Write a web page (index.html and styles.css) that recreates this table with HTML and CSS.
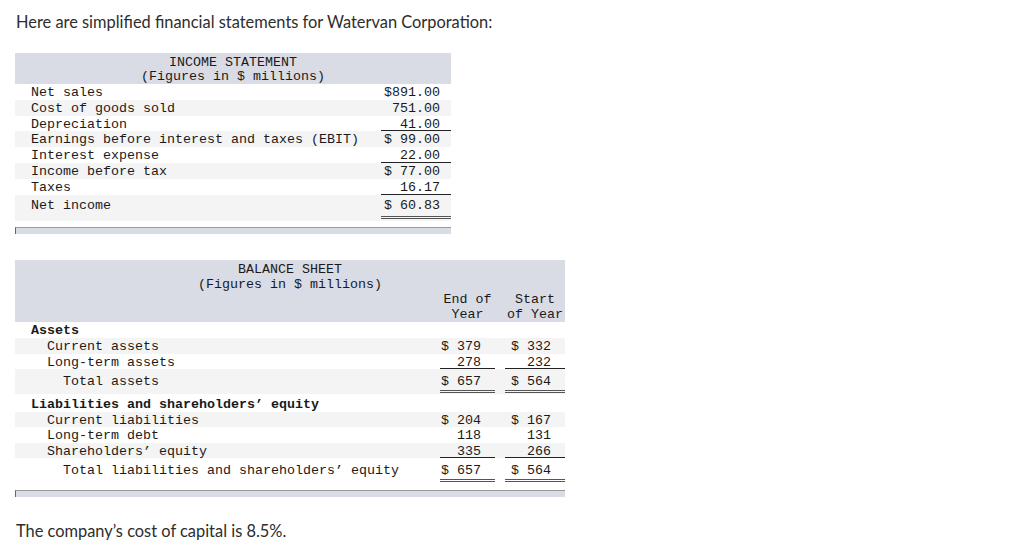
FILE: index.html
```html
<!DOCTYPE html>
<html>
<head>
<meta charset="utf-8">
<link rel="stylesheet" href="styles.css">
</head>
<body>
<div class="page">
  <p class="intro">Here are simplified financial statements for Watervan Corporation:</p>

  <table class="fin income">
    <thead>
      <tr class="hd"><th colspan="2">INCOME STATEMENT<br>(Figures in $ millions)</th></tr>
    </thead>
    <tbody>
      <tr><td class="lbl">Net sales</td><td class="val">$891.00</td></tr>
      <tr class="alt"><td class="lbl">Cost of goods sold</td><td class="val">751.00</td></tr>
      <tr><td class="lbl">Depreciation</td><td class="val ul">41.00</td></tr>
      <tr class="alt"><td class="lbl">Earnings before interest and taxes (EBIT)</td><td class="val">$ 99.00</td></tr>
      <tr><td class="lbl">Interest expense</td><td class="val ul">22.00</td></tr>
      <tr class="alt"><td class="lbl">Income before tax</td><td class="val">$ 77.00</td></tr>
      <tr><td class="lbl">Taxes</td><td class="val ul">16.17</td></tr>
      <tr class="alt net"><td class="lbl">Net income</td><td class="val"><span class="dbl">$ 60.83</span></td></tr>
    </tbody>
  </table>
  <div class="bar bar-income"></div>

  <table class="fin balance">
    <thead>
      <tr class="hd"><th colspan="3">BALANCE SHEET<br>(Figures in $ millions)</th></tr>
      <tr class="hd sub"><th></th><th class="num"><span class="ch">End of<br>Year</span></th><th class="num"><span class="ch">Start<br>of Year</span></th></tr>
    </thead>
    <tbody>
      <tr class="sec"><td class="lbl b">Assets</td><td></td><td></td></tr>
      <tr class="alt"><td class="lbl i1">Current assets</td><td class="num"><span>$ 379</span></td><td class="num"><span>$ 332</span></td></tr>
      <tr><td class="lbl i1">Long-term assets</td><td class="num"><span class="ul">278</span></td><td class="num"><span class="ul">232</span></td></tr>
      <tr class="alt tot"><td class="lbl i2">Total assets</td><td class="num"><span class="dbl">$ 657</span></td><td class="num"><span class="dbl">$ 564</span></td></tr>
      <tr class="sec sec2"><td class="lbl b">Liabilities and shareholders’ equity</td><td></td><td></td></tr>
      <tr class="alt"><td class="lbl i1">Current liabilities</td><td class="num"><span>$ 204</span></td><td class="num"><span>$ 167</span></td></tr>
      <tr><td class="lbl i1">Long-term debt</td><td class="num"><span>118</span></td><td class="num"><span>131</span></td></tr>
      <tr class="alt"><td class="lbl i1">Shareholders’ equity</td><td class="num"><span class="ul">335</span></td><td class="num"><span class="ul">266</span></td></tr>
      <tr class="tot"><td class="lbl i2">Total liabilities and shareholders’ equity</td><td class="num"><span class="dbl">$ 657</span></td><td class="num"><span class="dbl">$ 564</span></td></tr>
    </tbody>
  </table>
  <div class="bar bar-balance"></div>

  <p class="outro">The company’s cost of capital is 8.5%.</p>
</div>
</body>
</html>
```

FILE: styles.css
```css
html, body {
  margin: 0;
  padding: 0;
  background: #ffffff;
}

.page {
  padding: 12px 15px 0 15px;
  font-family: "Lato", "Open Sans", sans-serif;
  color: #2d2d2d;
}

.intro {
  margin: 0;
  font-size: 16.4px;
  line-height: 20px;
  padding-left: 1px;
}

.outro {
  margin: 24px 0 0 0;
  font-size: 16.4px;
  line-height: 20px;
  padding-left: 1px;
}

.fin {
  border-collapse: collapse;
  border-spacing: 0;
  font-family: "Liberation Mono", "Courier New", monospace;
  font-size: 13.33px;
  color: #1a1a1a;
}

.fin td, .fin th {
  padding: 0;
  white-space: pre;
  vertical-align: top;
}

.hd th {
  background: #d9dce5;
  font-weight: normal;
  text-align: center;
}

.alt td {
  background: #f4f4f4;
}

/* ---------- income statement ---------- */
.income {
  width: 436px;
  margin-top: 21px;
}
.income .hd th {
  padding-top: 3px;
  line-height: 14px;
}
.income tbody td {
  padding-top: 3px;
  line-height: 12.8px;
}
.income .lbl {
  padding-left: 16px;
}
.income .val {
  width: 59px;
  text-align: right;
  padding-right: 11px;
}
.income .ul {
  box-shadow: inset 0 -1px 0 #222;
}
.income .net td {
  padding-top: 5px;
  padding-bottom: 2px;
}
.income .net .val {
  padding-right: 0;
}
.income .net .dbl {
  display: block;
  padding-right: 11px;
  padding-bottom: 4px;
  border-bottom: 3px double #555;
}

.bar {
  height: 6px;
  background: #d9dce5;
  border-top: 1px solid #9a9a9a;
  border-left: 1px solid #666;
}
.bar-income {
  width: 435px;
  margin-top: 6px;
}
.bar-balance {
  width: 549px;
  margin-top: 7px;
}

/* ---------- balance sheet ---------- */
.balance {
  width: 550px;
  margin-top: 26px;
}
.balance .hd th {
  line-height: 14.75px;
}
.balance .hd:first-child th {
  padding-top: 3px;
}
.balance tbody td {
  padding-top: 2px;
  line-height: 13.5px;
}
.balance .lbl {
  padding-left: 16px;
}
.balance .lbl.b {
  font-weight: bold;
}
.balance .sec td {
  line-height: 14px;
}
.balance .sec2 td {
  padding-top: 4px;
}
.balance .lbl.i1 {
  padding-left: 32px;
}
.balance .lbl.i2 {
  padding-left: 48px;
}
.balance .num {
  text-align: right;
}
.balance .num:nth-child(2) {
  width: 68px;
}
.balance .num:nth-child(3) {
  width: 65px;
}
.balance .num span {
  display: block;
  padding-right: 14px;
}
.balance .num:nth-child(2) span {
  margin-left: 8px;
  margin-right: 5px;
}
.balance .num:nth-child(3) span {
  margin-left: 5px;
  margin-right: 0;
}
.balance .num span.ch {
  text-align: center;
  padding-right: 0;
}
.balance .ul {
  box-shadow: inset 0 -1px 0 #222;
}
.balance .tot td {
  padding-bottom: 1px;
}
.balance .tot .lbl {
  padding-top: 6px;
}
.balance .tot .num {
  padding-top: 0;
}
.balance .tot .num span {
  padding-top: 6px;
  padding-bottom: 1px;
  border-bottom: 3px double #555;
}
```
